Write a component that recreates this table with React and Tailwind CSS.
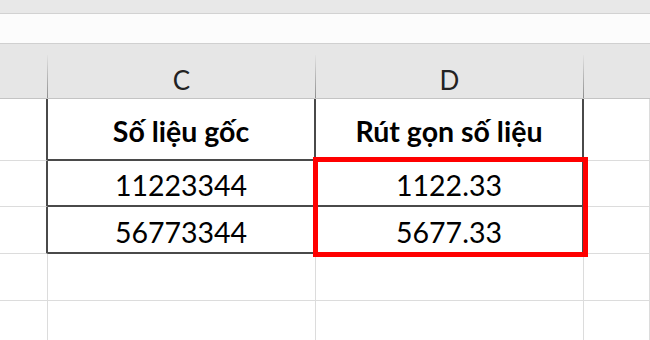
import React from 'react';

const font = { fontFamily: 'Lato, "Noto Sans", sans-serif' };

// column widths: B (cut off), C, D, E (rest)
const cols = ['B', 'C', 'D', 'E'];

const rows = [
  { h: 'h-[62px]', cells: ['Số liệu gốc', 'Rút gọn số liệu'], bold: true },
  { h: 'h-[46px]', cells: ['11223344', '1122.33'] },
  { h: 'h-[47px]', cells: ['56773344', '5677.33'] },
  { h: 'h-[47px]', cells: null },
  { h: 'h-[47px]', cells: null },
];

function HeaderCell({ label, width }) {
  return (
    <div className={`flex ${width} shrink-0`}>
      <div className="flex-1 flex items-center justify-center pt-[18px] text-[26px] text-[#222]">
        {label}
      </div>
      <div className="w-px mt-[11px] bg-gradient-to-b from-[#e2e2e2] to-[#8f8f8f]" />
    </div>
  );
}

function Cell({ children, width, inTable, leftOfTable, last, bold }) {
  let border = 'border-r border-b border-[#dcdcdc]';
  if (inTable) border = 'border-r-2 border-b-2 border-[#4a4a4a]';
  if (leftOfTable) border = 'border-b border-b-[#dcdcdc] border-r-2 border-r-[#4a4a4a]';
  return (
    <div
      className={`${width} ${last ? 'flex-1' : 'shrink-0'} ${border} flex items-center justify-center pt-[5px] text-[28.5px] text-black ${bold ? 'font-bold' : ''}`}
    >
      {children}
    </div>
  );
}

export default function App() {
  const widths = ['w-[48px]', 'w-[268px]', 'w-[268px]', ''];

  return (
    <div className="relative w-[650px] h-[340px] overflow-hidden bg-white" style={font}>
      {/* ribbon edge + formula strip */}
      <div className="h-[14px] bg-[#e8e8e8] border-b border-[#d2d2d2]" />
      <div className="h-[30px] bg-[#fcfcfc] border-b border-[#d0d0d0]" />

      {/* column headers */}
      <div className="flex h-[55px] bg-[#e6e6e6] border-b border-[#c4c4c4]">
        <HeaderCell label="" width="w-[48px]" />
        <HeaderCell label="C" width="w-[268px]" />
        <HeaderCell label="D" width="w-[268px]" />
        <div className="flex-1" />
      </div>

      {/* sheet rows */}
      {rows.map((row, r) => (
        <div key={r} className={`flex ${row.h}`}>
          {cols.map((c, i) => {
            const inTable = row.cells && (i === 1 || i === 2);
            return (
              <Cell
                key={c}
                width={widths[i]}
                last={i === 3}
                inTable={inTable}
                leftOfTable={row.cells && i === 0}
                bold={row.bold}
              >
                {inTable ? row.cells[i - 1] : null}
              </Cell>
            );
          })}
        </div>
      ))}

      {/* highlight around the shortened values */}
      <div className="absolute left-[313px] top-[157px] w-[275px] h-[100px] border-[5px] border-[#ff0000]" />
    </div>
  );
}
